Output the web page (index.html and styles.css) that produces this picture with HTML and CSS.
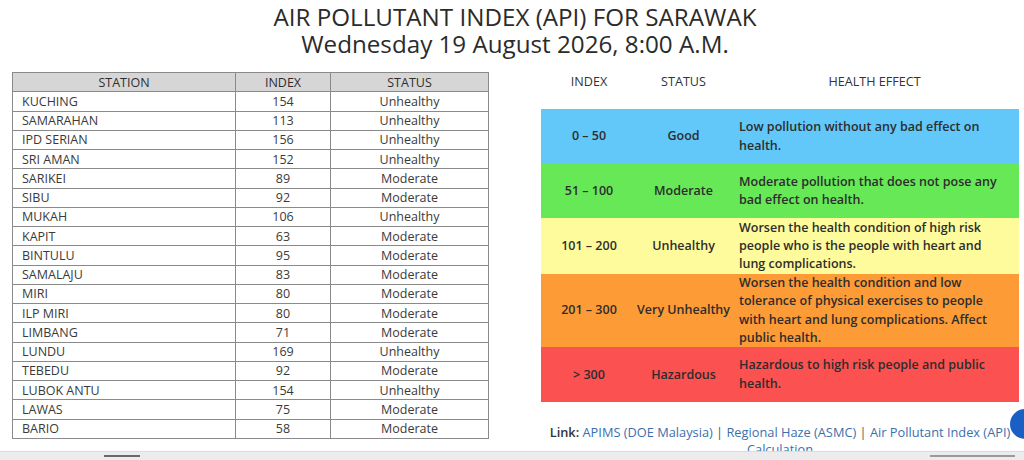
FILE: index.html
```html
<!DOCTYPE html>
<html>
<head>
<meta charset="utf-8">
<link rel="stylesheet" href="styles.css">
</head>
<body>
<header class="title">
  <h1>AIR POLLUTANT INDEX (API) FOR SARAWAK</h1>
  <h2>Wednesday 19 August 2026, 8:00 A.M.</h2>
</header>
<main class="content">
  <table class="stations">
    <thead>
      <tr><th class="c-st">STATION</th><th class="c-ix">INDEX</th><th class="c-ss">STATUS</th></tr>
    </thead>
    <tbody>
      <tr><td class="name">KUCHING</td><td>154</td><td>Unhealthy</td></tr>
      <tr><td class="name">SAMARAHAN</td><td>113</td><td>Unhealthy</td></tr>
      <tr><td class="name">IPD SERIAN</td><td>156</td><td>Unhealthy</td></tr>
      <tr><td class="name">SRI AMAN</td><td>152</td><td>Unhealthy</td></tr>
      <tr><td class="name">SARIKEI</td><td>89</td><td>Moderate</td></tr>
      <tr><td class="name">SIBU</td><td>92</td><td>Moderate</td></tr>
      <tr><td class="name">MUKAH</td><td>106</td><td>Unhealthy</td></tr>
      <tr><td class="name">KAPIT</td><td>63</td><td>Moderate</td></tr>
      <tr><td class="name">BINTULU</td><td>95</td><td>Moderate</td></tr>
      <tr><td class="name">SAMALAJU</td><td>83</td><td>Moderate</td></tr>
      <tr><td class="name">MIRI</td><td>80</td><td>Moderate</td></tr>
      <tr><td class="name">ILP MIRI</td><td>80</td><td>Moderate</td></tr>
      <tr><td class="name">LIMBANG</td><td>71</td><td>Moderate</td></tr>
      <tr><td class="name">LUNDU</td><td>169</td><td>Unhealthy</td></tr>
      <tr><td class="name">TEBEDU</td><td>92</td><td>Moderate</td></tr>
      <tr><td class="name">LUBOK ANTU</td><td>154</td><td>Unhealthy</td></tr>
      <tr><td class="name">LAWAS</td><td>75</td><td>Moderate</td></tr>
      <tr><td class="name">BARIO</td><td>58</td><td>Moderate</td></tr>
    </tbody>
  </table>

  <section class="legend">
    <div class="lg-head">
      <div>INDEX</div><div>STATUS</div><div>HEALTH EFFECT</div>
    </div>
    <div class="lg-row good">
      <div class="lg-ix">0 – 50</div><div class="lg-st">Good</div>
      <div class="lg-fx">Low pollution without any bad effect on health.</div>
    </div>
    <div class="lg-row moderate">
      <div class="lg-ix">51 – 100</div><div class="lg-st">Moderate</div>
      <div class="lg-fx">Moderate pollution that does not pose any bad effect on health.</div>
    </div>
    <div class="lg-row unhealthy">
      <div class="lg-ix">101 – 200</div><div class="lg-st">Unhealthy</div>
      <div class="lg-fx">Worsen the health condition of high risk people who is the people with heart and lung complications.</div>
    </div>
    <div class="lg-row very">
      <div class="lg-ix">201 – 300</div><div class="lg-st">Very Unhealthy</div>
      <div class="lg-fx">Worsen the health condition and low tolerance of physical exercises to people with heart and lung complications. Affect public health.</div>
    </div>
    <div class="lg-row hazard">
      <div class="lg-ix">&gt; 300</div><div class="lg-st">Hazardous</div>
      <div class="lg-fx">Hazardous to high risk people and public health.</div>
    </div>
    <p class="links"><span class="lbl">Link:</span> <a href="#">APIMS (DOE Malaysia)</a> <span class="sep">|</span> <a href="#">Regional Haze (ASMC)</a> <span class="sep">|</span> <a href="#">Air Pollutant Index (API) Calculation</a></p>
  </section>
</main>
<div class="chat-bubble"></div>
<div class="hscroll"><div class="thumb t1"></div><div class="thumb t2"></div></div>
</body>
</html>
```

FILE: styles.css
```css
html, body {
  margin: 0;
  padding: 0;
  background: #ffffff;
  overflow: hidden;
}
body {
  font-family: "Open Sans", "Liberation Sans", sans-serif;
  color: #333333;
  width: 1024px;
  height: 460px;
}
.title {
  text-align: center;
  padding-top: 3px;
  padding-left: 6px;
}
.title h1, .title h2 {
  margin: 0;
  font-weight: 400;
  font-size: 24.2px;
  line-height: 27px;
  color: #2b2b2b;
}
.content {
  display: flex;
  align-items: flex-start;
  margin-top: 15px;
  padding-left: 12px;
}
.stations {
  border-collapse: collapse;
  width: 477px;
  font-size: 12.5px;
  color: #3a3a3a;
  table-layout: fixed;
}
.stations th, .stations td {
  border: 1px solid #8a8a8a;
  height: 18.25px;
  line-height: 17px;
  padding: 0;
  text-align: center;
  font-weight: 400;
}
.stations th {
  background: #d6d6d6;
  color: #2e2e2e;
}
.stations .c-st { width: 222px; }
.stations .c-ix { width: 94px; }
.stations td.name {
  text-align: left;
  padding-left: 9px;
}
.legend {
  margin-left: 52px;
  width: 478px;
}
.lg-head, .lg-row {
  display: grid;
  grid-template-columns: 96px 93px 1fr;
}
.lg-head {
  font-size: 12.6px;
  color: #333;
  text-align: center;
  line-height: 20px;
  margin-top: 0;
  margin-bottom: 17px;
}
.lg-row {
  min-height: 55px;
  font-size: 12.5px;
  font-weight: 600;
  color: #2d2d2d;
  align-items: center;
  line-height: 18.3px;
}
.lg-ix, .lg-st { text-align: center; }
.lg-fx { padding-left: 9px; padding-right: 14px; }
.good { background: #62c8fa; }
.moderate { background: #67e857; height: 54px; min-height: 54px; }
.unhealthy { background: #fefb9c; height: 56px; }
.very { background: #fd9b36; }
.hazard { background: #fb5151; }
.links {
  margin: 22px 0 0 0;
  font-size: 12.8px;
  line-height: 17px;
  text-align: center;
  color: #333;
}
.links .lbl { font-weight: 600; }
.links a {
  color: #3b6fae;
  text-decoration: none;
}
.links .sep { color: #555; }
.chat-bubble {
  position: fixed;
  left: 1010px;
  top: 409px;
  width: 30px;
  height: 30px;
  border-radius: 50%;
  background: #1a5fc4;
}
.hscroll {
  position: fixed;
  left: 0;
  bottom: 0;
  width: 1024px;
  height: 8px;
  background: #ececec;
  border-top: 1px solid #dcdcdc;
}
.thumb {
  position: absolute;
  top: 3px;
  height: 2px;
  background: #6a6a6a;
}
.t1 { left: 104px; width: 36px; }
.t2 { left: 930px; width: 85px; background: #9a9a9a; }
```
